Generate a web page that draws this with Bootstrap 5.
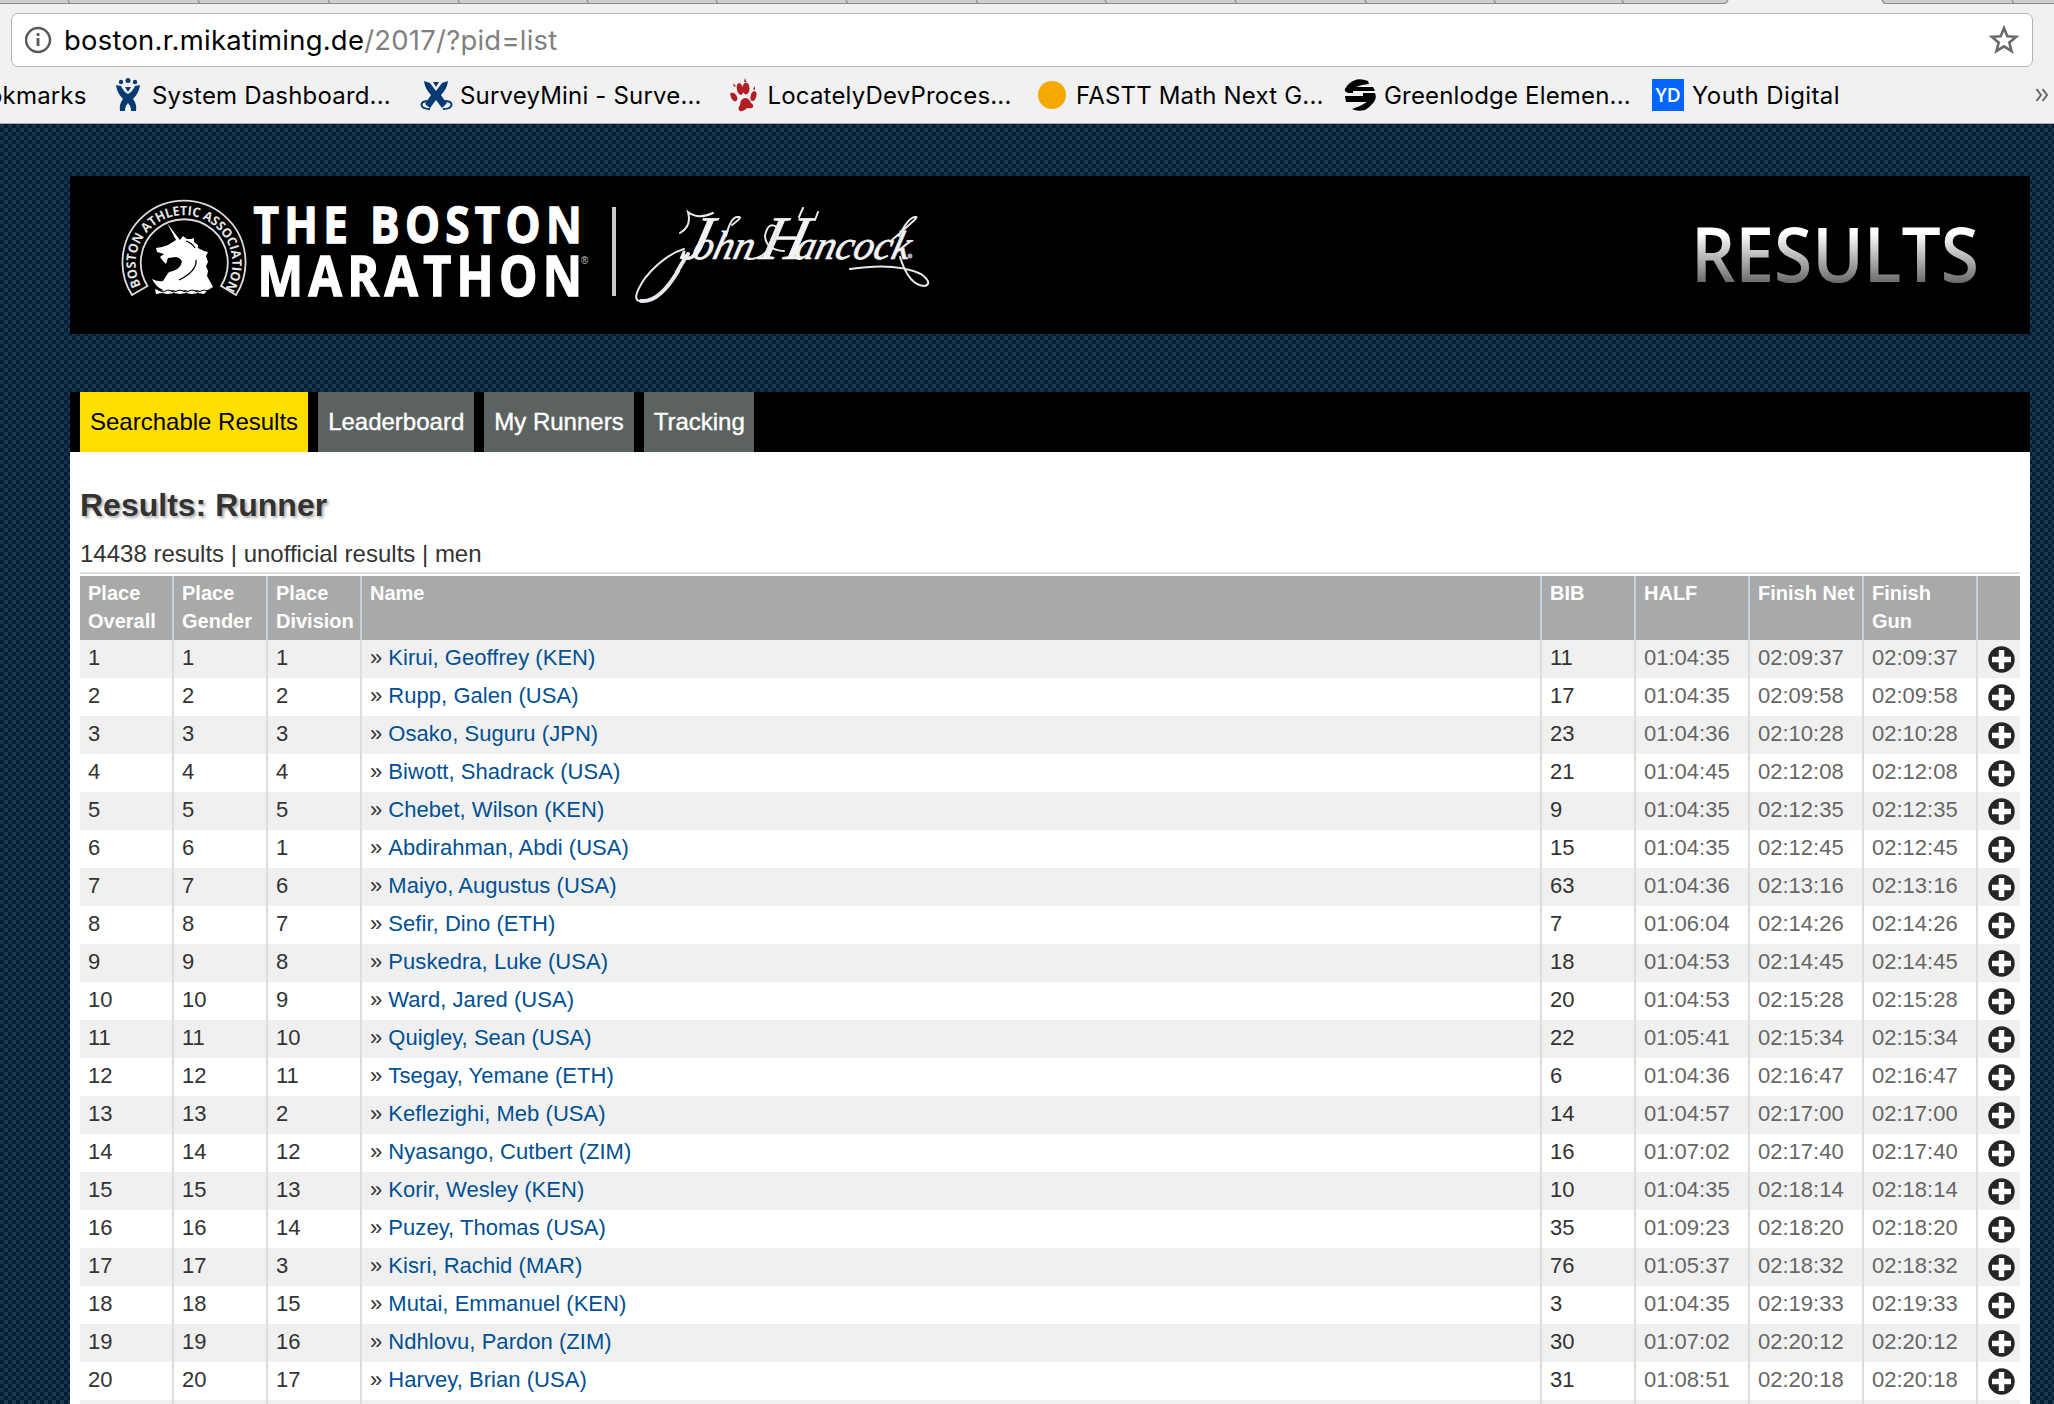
<!DOCTYPE html>
<html lang="en">
<head>
<meta charset="utf-8">
<title>Results: Runner</title>
<link href="https://cdn.jsdelivr.net/npm/bootstrap@5.3.0/dist/css/bootstrap.min.css" rel="stylesheet">
<style>
html,body{height:1404px;overflow:hidden}
body{font-family:"Liberation Sans",Arial,sans-serif;color:#333;background:#0b2a43;line-height:1}
.chrome-ui{height:124px;background:#f1f1f1;border-bottom:1px solid #a9a9a9;font-family:Inter,Roboto,sans-serif;color:#000}
.tabstrip{height:4px}
.omnibox{height:54px;margin:9px 21px 0 11px;border:1px solid #b4b4b4;border-radius:7px;background:#fff;padding:0 13px 0 13px}
.url{font-size:27.4px;letter-spacing:.27px;margin-left:12px;padding-top:2px;white-space:pre}
.url span{color:#808080}
.bookmarks{height:56px;font-size:24px;letter-spacing:.18px;overflow:hidden}
.bm{flex:none;white-space:nowrap;height:34px}
.bm span{line-height:35px}
.bm0{margin-left:-12px}.bm1{margin-left:11px}.bm2{margin-left:7px}.bm3{margin-left:9.500px}.bm4{margin-left:10px}.bm5{margin-left:7px}.bm6{margin-left:8px;letter-spacing:.4px}
.yd{width:32px;height:32px;background:#0066ff;color:#fff;font:600 19px/33px "Open Sans",sans-serif;letter-spacing:0;text-align:center}
.site{height:1280px;padding:52px 24px 0 70px;overflow:hidden;
 background:conic-gradient(#031d34 25%,#1b3a52 0 50%,#031d34 0 75%,#15324a 0) 0 0/8px 8px}
.masthead{height:158px;background:#000}
.mainbar{height:60px;margin-top:58px;background:#000;padding-left:10px;gap:10px}
.mainbar .nav-link{height:60px;padding:0 10px;font-size:24px;line-height:60px;background:#5b6260;color:#fff;border-radius:0;-webkit-text-stroke:.4px #fff}
.mainbar .nav-link:last-child{padding-right:9px}
.mainbar .nav-link.active{background:#ffdf00;color:#000;-webkit-text-stroke:0}
.panel{height:960px;background:#fff;padding:34px 10px 0}
.panel h1{font-size:32px;font-weight:700;line-height:38px;margin:0;text-shadow:2px 2px 3px #aaa}
.summary{font-size:24px;line-height:28px;margin-top:16px;height:32px}
.rule{height:2px;background:#ddd;margin:0 0 2px}
.results{table-layout:fixed;width:1940px;margin:0;font-size:22px;color:#333;border-collapse:separate;border-spacing:0}
.results>:not(caption)>*>*{padding:0 0 0 8px;border:0 solid #ddd;border-right-width:2px;box-shadow:none}
.results>:not(caption)>*>*:last-child{border-right:0}
.results>thead>tr>th{height:64px;padding:3px 0 5px 8px;background:#a9a9a9;border-color:#c6d2de;color:#fff;font-size:20px;line-height:28px;vertical-align:top}
.results>tbody>tr>td{height:38px;line-height:36px;padding-bottom:2px;background:#fff;color:#333;vertical-align:top}
.results>tbody>tr:nth-child(odd)>td{background:#f0f0f0}
.results>tbody>tr>td.time{color:#666}
.results a{color:#005093;text-decoration:none;letter-spacing:.04px}
.results svg{display:block;margin:6px 0 0 1.500px}
</style>
<script src="https://cdn.jsdelivr.net/npm/bootstrap@5.3.0/dist/js/bootstrap.bundle.min.js"></script>
</head>
<body>
<header class="chrome-ui">
 <svg class="tabstrip d-block" width="2054" height="4"><path d="M0 0H1728L1725 3.5H0zM1882 0H2054V3.5H1885z" fill="#cfcfcf"/><path d="M0 3.5H1724Q1727 3 1728 0M1882 0Q1883 3.500 1886 3.500H2054M68 0l2 4M198 0l2 4M328 0l2 4M458 0l2 4M587 0l2 4M716 0l2 4M846 0l2 4M976 0l2 4M1105 0l2 4M1235 0l2 4M1365 0l2 4M1494 0l2 4M1622 0l2 4M2012 0l2 4" fill="none" stroke="#8c8c8c" stroke-width="1.2"/></svg>
 <div class="omnibox d-flex align-items-center">
  <svg width="27" height="28" viewBox="0 0 27 28"><circle cx="13" cy="14" r="12" fill="none" stroke="#5a5a5a" stroke-width="2.500"/><path d="M13 12v8M13 7v3" stroke="#5a5a5a" stroke-width="2.800"/></svg>
  <div class="url">boston.r.mikatiming.de<span>/2017/?pid=list</span></div>
  <svg class="ms-auto" width="30" height="30" viewBox="0 0 30 30"><path d="M15 3l3.300 8.200 9 .6-7 5.700 2.300 8.700L15 21.400l-7.600 4.800 2.300-8.700-7-5.700 9-.6z" fill="none" stroke="#6a6a6a" stroke-width="2.600"/></svg>
 </div>
 <nav class="bookmarks d-flex align-items-center">
  <div class="bm" style="width:115px"><span class="bm0">okmarks</span></div>
  <div class="bm d-flex align-items-center" style="width:305px"><svg width="26" height="34" viewBox="0 0 26 34"><g fill="#063a73"><circle cx="6" cy="4" r="2.200"/><circle cx="13" cy="2.500" r="2.500"/><circle cx="20" cy="4" r="2.200"/><path d="M1 7l5 1q2 5 7 8 5-3 7-8l5-1q-1 8-7 14 4 5 3 12h-5q0-5-3-8-3 3-3 8H5q-1-7 3-12Q2 15 1 7zM10 9h6l-3 5z"/></g></svg><span class="bm1">System Dashboard...</span></div>
  <div class="bm d-flex align-items-center" style="width:310px"><svg width="33" height="30" viewBox="0 0 33 30"><path d="M4 1l6 2 6 8 6-8 6-2q-1 8-7 14 3 5 6 8l-5 5-6-8-6 8-5-4 6-9Q5 9 4 1zM13 2h6l-3 5z" fill="#063a73"/><path d="M9 21Q1 21 1.500 25T10 29M24 21q8 0 7.500 4T23 29" fill="none" stroke="#063a73" stroke-width="2"/></svg><span class="bm2">SurveyMini - Surve...</span></div>
  <div class="bm d-flex align-items-center" style="width:308px"><svg width="28" height="34" viewBox="0 0 28 34"><g fill="#b11f24"><ellipse cx="10" cy="11" rx="3.200" ry="6" transform="rotate(-12 10 11)"/><ellipse cx="16" cy="10.500" rx="3.500" ry="6"/><ellipse cx="4" cy="19" rx="2.800" ry="4.500" transform="rotate(-30 4 19)"/><ellipse cx="23.500" cy="18" rx="2.800" ry="5" transform="rotate(15 23 18)"/><path d="M15 20q4 0 6 5 3 2 2 4t-6 1q-3 4-7 3-3-2 0-6 0-6 5-7zM14 4l1-4 1.500 4zM4 9L3 5l3 3zM23 11l2-3v4zM1 14l-1 3 2-1z"/></g></svg><span class="bm3">LocatelyDevProces...</span></div>
  <div class="bm d-flex align-items-center" style="width:306px"><svg width="28" height="28"><circle cx="14" cy="14" r="14" fill="#f4a800"/></svg><span class="bm4">FASTT Math Next G...</span></div>
  <div class="bm d-flex align-items-center" style="width:308px"><svg width="33" height="32" viewBox="0 0 33 32"><path d="M10 1.500Q16-1 24 2l1 3-7 1-6 2h17l2 4H9v2h12l10 0q2 5-1 9-4 5-9 8-8 2-13-1l8-3 7-4H2L1 17h18v-3H5q-5-1-4-4 3-6 9-8.500z" fill="#000"/></svg><span class="bm5">Greenlodge Elemen...</span></div>
  <div class="bm d-flex align-items-center" style="width:383px"><div class="yd">YD</div><span class="bm6">Youth Digital</span></div>
  <svg width="14" height="14" viewBox="0 0 14 14"><path d="M1.500 1l4.500 6-4.500 6M7.500 1L12 7l-4.500 6" fill="none" stroke="#666" stroke-width="2"/></svg>
 </nav>
</header>
<main class="site">
 <div class="masthead d-flex justify-content-between">
  <svg width="880" height="158" viewBox="70 176 880 158" fill="#fff">
   <g fill="none" stroke="#ddd" stroke-width="1.800"><path d="M132 295A61.500 61.500 0 1 1 236 295L221 286A43.500 43.500 0 1 0 147.500 286Z"/></g>
   <path id="arch" d="M141.500 286.500A48.300 48.300 0 1 1 226.500 286.500" fill="none"/>
   <text font-family="Open Sans,sans-serif" font-weight="700" font-size="13" fill="#e6e6e6"><textPath href="#arch" startOffset="1" textLength="201" lengthAdjust="spacingAndGlyphs">BOSTON ATHLETIC ASSOCIATION</textPath></text>
   <path d="M167 223L180 240L183 236L187 239L191 239L194 238L194 242L198 245L198 248L204 251L208 252L206 256L208 262L206 266L208 271L207 276L213 287L208 290L163 290Q156 287 152 279Q158 282 163 281Q166 276 169 272Q180 270 182 262Q181 258 176 257L168 258L166 264L163 261L160 257L164 254L157 252L156 248L162 247L168 245L176 240Z"/>
   <path d="M196 260q1 11-17 20M186 241q6 2 9 7" fill="none" stroke="#000" stroke-width="1.300"/>
   <path d="M155 289l6 2 6-2 6 2 6-2 6 2 6-2 6 2 6-2 4 2-3 3-6-1-6 1-6-1-6 1-6-1-6 1-6-1-6 1z"/>
   <path d="M158 290l5 2 5-2 6 2 6-2 6 2 6-2 6 2 6-2 5 2" fill="none" stroke="#000" stroke-width="1"/>
   <g font-family="Open Sans,Noto Sans,sans-serif" font-weight="700" stroke="#fff" stroke-width="1.400">
    <text transform="translate(253.500 243.300) scale(.88 1)" font-size="50" textLength="373">THE BOSTON</text>
    <text transform="translate(257.500 295.500) scale(.88 1)" font-size="55" textLength="369">MARATHON</text>
   </g>
   <text x="581" y="264" font-size="10" font-family="Liberation Sans" fill="#ccc">®</text>
   <rect x="612" y="207" width="4" height="89" fill="#c9c9c9"/>
   <text transform="translate(0 259) skewX(-14)" font-family="Liberation Serif,serif" font-style="italic" font-size="40.500" fill="#f4f4f6" stroke="#f4f4f6" stroke-width=".7"><tspan x="679" font-size="62">J</tspan><tspan x="691">ohn</tspan><tspan x="758" font-size="62">H</tspan><tspan x="793">ancock</tspan></text>
   <circle cx="910" cy="256" r="2.500" fill="#aab"/>
   <g fill="none" stroke="#e8e8ee" stroke-width="2" stroke-linecap="round">
    <path d="M680 233Q692 226 688 212Q698 220 713 213M684 249Q664 255 645 278Q629 302 642 301"/>
    <path d="M688 254Q682 263 677 272" stroke-width="4"/>
    <path d="M678 271Q659 303 641 301" stroke-width="4"/>
    <path d="M748 259Q770 260 778 228Q768 220 765 236Q766 250 784 251M799 217L803 208M815 220L818 212M732 225Q744 216 738 217Q731 216 726 236"/>
    <path d="M892 240Q920 216 916 217Q909 216 899 236"/>
    <path d="M900 257Q909 286 925 286Q933 283 921 274Q896 262 850 269"/>
   </g>
  </svg>
  <svg width="400" height="158" viewBox="1630 176 400 158">
   <defs><linearGradient id="metal" gradientUnits="userSpaceOnUse" x1="0" y1="228" x2="0" y2="282"><stop offset=".1" stop-color="#fff"/><stop offset="1" stop-color="#6f6b6b"/></linearGradient></defs>
   <text x="1691" y="281.500" font-family="Open Sans,Noto Sans,sans-serif" font-weight="600" font-size="76" fill="url(#metal)" textLength="288" lengthAdjust="spacingAndGlyphs">RESULTS</text>
  </svg>
 </div>
 <nav class="nav mainbar">
  <a class="nav-link active" href="#">Searchable Results</a><a class="nav-link" href="#">Leaderboard</a><a class="nav-link" href="#">My Runners</a><a class="nav-link" href="#">Tracking</a>
 </nav>
 <section class="panel">
  <h1>Results: Runner</h1>
  <div class="summary">14438 results | unofficial results | men</div>
  <div class="rule"></div>
  <table class="table results">
   <colgroup><col style="width:94px"><col style="width:94px"><col style="width:94px"><col style="width:1180px"><col style="width:94px"><col style="width:114px"><col style="width:114px"><col style="width:114px"><col style="width:42px"></colgroup>
   <thead><tr><th>Place<br>Overall</th><th>Place<br>Gender</th><th>Place<br>Division</th><th>Name</th><th>BIB</th><th>HALF</th><th class="text-nowrap">Finish Net</th><th>Finish<br>Gun</th><th></th></tr></thead>
   <tbody id="rows"></tbody>
  </table>
 </section>
</main>
<script>
// division place | name | bib | half | finish
const runners=`1|Kirui, Geoffrey (KEN)|11|01:04:35|02:09:37
2|Rupp, Galen (USA)|17|01:04:35|02:09:58
3|Osako, Suguru (JPN)|23|01:04:36|02:10:28
4|Biwott, Shadrack (USA)|21|01:04:45|02:12:08
5|Chebet, Wilson (KEN)|9|01:04:35|02:12:35
1|Abdirahman, Abdi (USA)|15|01:04:35|02:12:45
6|Maiyo, Augustus (USA)|63|01:04:36|02:13:16
7|Sefir, Dino (ETH)|7|01:06:04|02:14:26
8|Puskedra, Luke (USA)|18|01:04:53|02:14:45
9|Ward, Jared (USA)|20|01:04:53|02:15:28
10|Quigley, Sean (USA)|22|01:05:41|02:15:34
11|Tsegay, Yemane (ETH)|6|01:04:36|02:16:47
2|Keflezighi, Meb (USA)|14|01:04:57|02:17:00
12|Nyasango, Cutbert (ZIM)|16|01:07:02|02:17:40
13|Korir, Wesley (KEN)|10|01:04:35|02:18:14
14|Puzey, Thomas (USA)|35|01:09:23|02:18:20
3|Kisri, Rachid (MAR)|76|01:05:37|02:18:32
15|Mutai, Emmanuel (KEN)|3|01:04:35|02:19:33
16|Ndhlovu, Pardon (ZIM)|30|01:07:02|02:20:12
17|Harvey, Brian (USA)|31|01:08:51|02:20:18`.split('\n').map(r=>r.split('|'));
const plus='<svg width="27" height="27" viewBox="0 0 27 27"><circle cx="13.500" cy="13.500" r="13.200" fill="#262626"/><path d="M13.500 4v19M4 13.500h19" stroke="#fff" stroke-width="5.500"/></svg>';
document.getElementById('rows').innerHTML=runners.map(([d,n,b,h,f],i)=>`<tr><td>${i+1}</td><td>${i+1}</td><td>${d}</td><td>» <a href="#">${n}</a></td><td>${b}</td><td class="time">${h}</td><td class="time">${f}</td><td class="time">${f}</td><td>${plus}</td></tr>`).join('')+'<tr>'+'<td></td>'.repeat(9)+'</tr>';
</script>
</body>
</html>
